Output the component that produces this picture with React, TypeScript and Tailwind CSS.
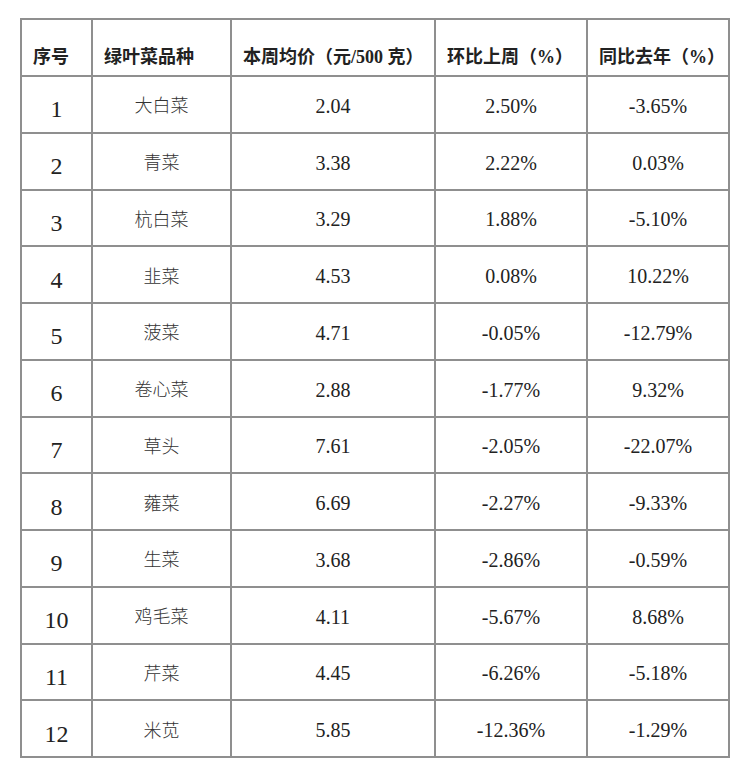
import React from "react";

const rows: [string, string, string, string, string][] = [
  ["1", "大白菜", "2.04", "2.50%", "-3.65%"],
  ["2", "青菜", "3.38", "2.22%", "0.03%"],
  ["3", "杭白菜", "3.29", "1.88%", "-5.10%"],
  ["4", "韭菜", "4.53", "0.08%", "10.22%"],
  ["5", "菠菜", "4.71", "-0.05%", "-12.79%"],
  ["6", "卷心菜", "2.88", "-1.77%", "9.32%"],
  ["7", "草头", "7.61", "-2.05%", "-22.07%"],
  ["8", "蕹菜", "6.69", "-2.27%", "-9.33%"],
  ["9", "生菜", "3.68", "-2.86%", "-0.59%"],
  ["10", "鸡毛菜", "4.11", "-5.67%", "8.68%"],
  ["11", "芹菜", "4.45", "-6.26%", "-5.18%"],
  ["12", "米苋", "5.85", "-12.36%", "-1.29%"],
];

const headers = ["序号", "绿叶菜品种", "本周均价（元/500 克）", "环比上周（%）", "同比去年（%）"];

export default function App() {
  return (
    <div className="w-[756px] h-[764px] bg-white pt-[18px] pl-[20px]">
      <table
        className="table-fixed border-collapse text-[#222]"
        style={{ fontFamily: '"Liberation Serif", "Noto Sans CJK SC", serif' }}
      >
        <colgroup>
          <col className="w-[71px]" />
          <col className="w-[139px]" />
          <col className="w-[204px]" />
          <col className="w-[152px]" />
          <col className="w-[142px]" />
        </colgroup>
        <thead>
          <tr className="h-[57px]">
            {headers.map((h) => (
              <th
                key={h}
                className="border-2 border-[#8f8f8f] text-left align-bottom pl-[11px] pr-0 pb-[6px] text-[18px] font-semibold whitespace-nowrap leading-[24px]"
              >
                {h}
              </th>
            ))}
          </tr>
        </thead>
        <tbody>
          {rows.map((r) => (
            <tr key={r[0]} className="h-[56.75px]">
              <td className="border-2 border-[#8f8f8f] text-center align-middle text-[24px] leading-none pt-[10px]">
                {r[0]}
              </td>
              <td
                className="border-2 border-[#8f8f8f] text-center align-middle text-[18px] leading-none text-[#333]"
                style={{ fontFamily: '"Noto Sans CJK SC", sans-serif', fontWeight: 300 }}
              >
                {r[1]}
              </td>
              <td className="border-2 border-[#8f8f8f] text-center align-middle text-[20px] leading-none pt-[3px]">
                {r[2]}
              </td>
              <td className="border-2 border-[#8f8f8f] text-center align-middle text-[20px] leading-none pt-[3px]">
                {r[3]}
              </td>
              <td className="border-2 border-[#8f8f8f] text-center align-middle text-[20px] leading-none pt-[3px]">
                {r[4]}
              </td>
            </tr>
          ))}
        </tbody>
      </table>
    </div>
  );
}
